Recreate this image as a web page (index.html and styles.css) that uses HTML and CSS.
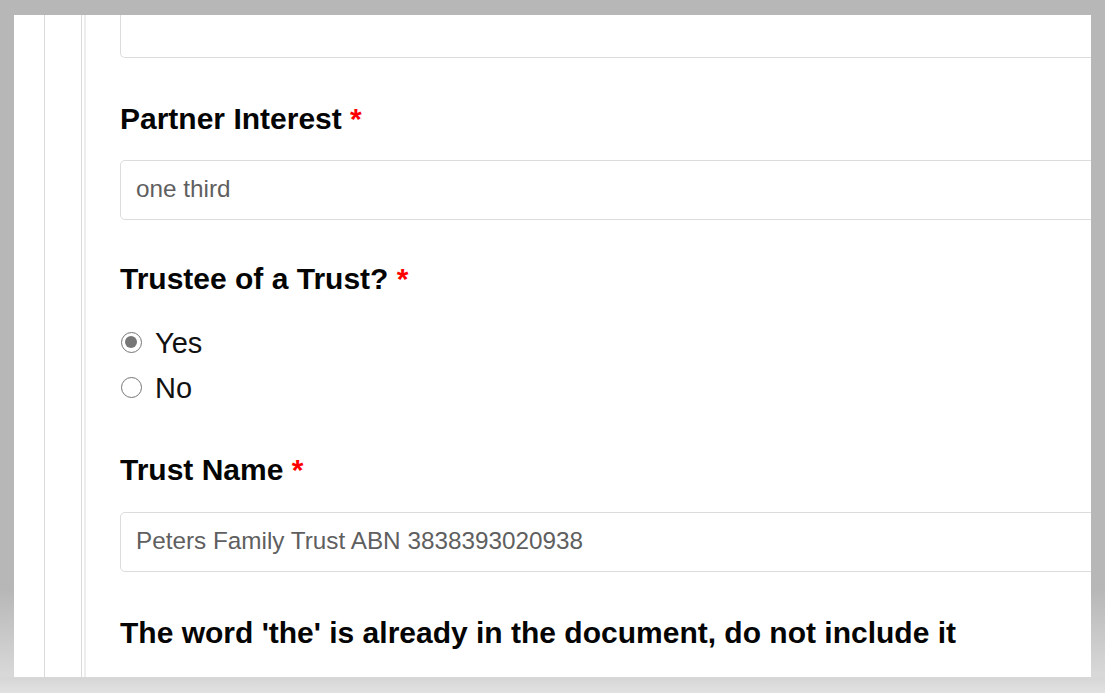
FILE: index.html
```html
<!DOCTYPE html>
<html>
<head>
<meta charset="utf-8">
<link rel="stylesheet" href="styles.css">
</head>
<body>
<div class="frame">
  <div class="panel">
    <div class="gutter"></div>
    <div class="rail"></div>
    <div class="content">
      <div class="input input-cut"></div>

      <div class="field field-a">
        <div class="label">Partner Interest <span class="req">*</span></div>
        <div class="input">one third</div>
      </div>

      <div class="field field-b">
        <div class="label">Trustee of a Trust? <span class="req">*</span></div>
        <div class="radios">
          <div class="radio-row"><span class="radio checked"></span><span class="radio-text">Yes</span></div>
          <div class="radio-row"><span class="radio"></span><span class="radio-text">No</span></div>
        </div>
      </div>

      <div class="field field-c">
        <div class="label">Trust Name <span class="req">*</span></div>
        <div class="input">Peters Family Trust ABN 3838393020938</div>
      </div>

      <div class="field field-d">
        <div class="label">The word 'the' is already in the document, do not include it</div>
      </div>
    </div>
  </div>
</div>
</body>
</html>
```

FILE: styles.css
```css
html, body {
  margin: 0;
  padding: 0;
  width: 1105px;
  height: 693px;
  overflow: hidden;
  font-family: "Liberation Sans", Arial, sans-serif;
}

.frame {
  box-sizing: border-box;
  width: 1105px;
  height: 693px;
  padding: 15px 14px 16px 14px;
  background:
    linear-gradient(to bottom, rgba(182,183,182,0) 0, rgba(182,183,182,0) 677px, #d6d6d6 678px, #e2e2e2 693px),
    linear-gradient(to bottom, #b6b7b6 0, #b6b7b6 590px, #d9d9d9 677px);
  display: flex;
}

.panel {
  flex: 1;
  background: #ffffff;
  display: flex;
  overflow: hidden;
}

.gutter {
  width: 30px;
  flex: none;
  border-right: 1px solid #dadada;
}

.rail {
  width: 36px;
  flex: none;
  border-right: 1px solid #dadada;
  box-shadow: 2px 0 0 #ffffff, 4px 0 0 #ededed;
}

.content {
  flex: none;
  width: 1100px;
  padding-left: 38px;
  display: flex;
  flex-direction: column;
}

.input {
  box-sizing: border-box;
  width: 1000px;
  height: 60px;
  border: 1px solid #dcdcdc;
  border-radius: 5px;
  padding: 0 15px;
  font-size: 24.3px;
  line-height: 56px;
  color: #5f5f5f;
  background: #fff;
}

.input-cut {
  height: 43px;
  border-top: none;
  border-top-left-radius: 0;
  border-top-right-radius: 0;
}

.field {
  display: flex;
  flex-direction: column;
}

.field-a { margin-top: 44px; }
.field-b { margin-top: 42px; }
.field-c { margin-top: 42px; }
.field-d { margin-top: 44px; }

.label {
  font-size: 30px;
  line-height: 33px;
  font-weight: bold;
  color: #050505;
  margin-bottom: 25px;
}

.field-b .label,
.field-c .label {
  margin-bottom: 26px;
}

.req {
  color: #ff0000;
}

.radios {
  display: flex;
  flex-direction: column;
}

.radio-row {
  display: flex;
  align-items: center;
  height: 45px;
  gap: 13px;
  margin-left: 1px;
}

.radio {
  box-sizing: border-box;
  width: 21px;
  height: 21px;
  border: 1.5px solid #767676;
  border-radius: 50%;
  background: #fff;
  flex: none;
  position: relative;
  top: -1px;
}

.radio.checked::after {
  content: "";
  position: absolute;
  left: 3px;
  top: 3px;
  width: 12px;
  height: 12px;
  border-radius: 50%;
  background: #767676;
}

.radio-text {
  font-size: 29px;
  color: #111;
}
```
